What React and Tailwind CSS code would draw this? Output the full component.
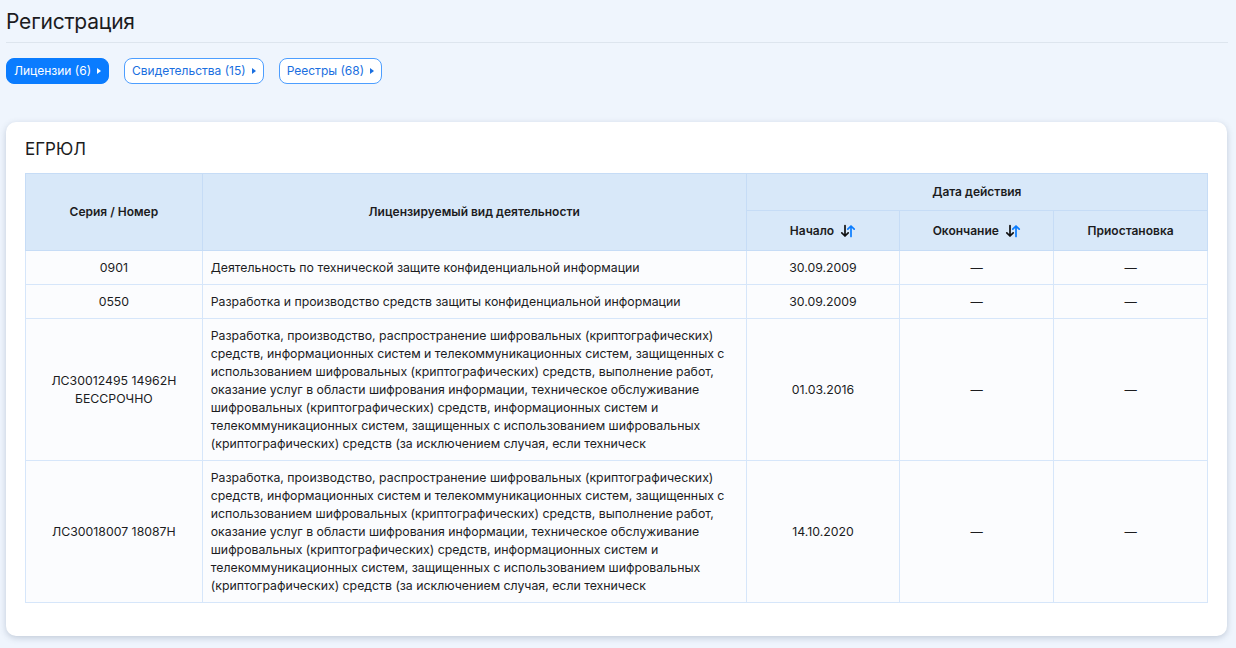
import { Fragment } from 'react';

const longText =
  'Разработка, производство, распространение шифровальных (криптографических) средств, информационных систем и телекоммуникационных систем, защищенных с использованием шифровальных (криптографических) средств, выполнение работ, оказание услуг в области шифрования информации, техническое обслуживание шифровальных (криптографических) средств, информационных систем и телекоммуникационных систем, защищенных с использованием шифровальных (криптографических) средств (за исключением случая, если техническ';

const rows = [
  { num: ['0901'], vid: 'Деятельность по технической защите конфиденциальной информации', start: '30.09.2009' },
  { num: ['0550'], vid: 'Разработка и производство средств защиты конфиденциальной информации', start: '30.09.2009' },
  { num: ['ЛСЗ0012495 14962Н', 'БЕССРОЧНО'], vid: longText, start: '01.03.2016' },
  { num: ['ЛСЗ0018007 18087Н'], vid: longText, start: '14.10.2020' },
];

const tabs = [
  { label: 'Лицензии (6)', active: true },
  { label: 'Свидетельства (15)' },
  { label: 'Реестры (68)' },
];

function Caret() {
  return (
    <svg width="4" height="6" viewBox="0 0 4 6">
      <path d="M0 0 L4 3 L0 6 Z" fill="currentColor" />
    </svg>
  );
}

function SortIcon() {
  return (
    <svg width="16" height="14" viewBox="0 0 16 14" className="ml-1.5 inline-block">
      <path d="M5 1.5 V12 M1.8 8.8 L5 12 L8.2 8.8" stroke="#111" strokeWidth="1.7" fill="none" strokeLinecap="round" strokeLinejoin="round" />
      <path d="M11 12.5 V2 M7.8 5.2 L11 2 L14.2 5.2" stroke="#0a7cff" strokeWidth="1.7" fill="none" strokeLinecap="round" strokeLinejoin="round" />
    </svg>
  );
}

export default function App() {
  return (
    <div className="min-h-[648px] bg-[#eff5fd] px-[6px] pt-[9px] pb-[10px] text-[#1c1c1e] font-['Inter','Noto_Sans',sans-serif]">
      <h1 className="text-[21px] leading-[26px] font-normal tracking-[-0.2px]">Регистрация</h1>
      <div className="mt-[7px] h-px bg-[#dde5ee] mr-[2px]" />

      <div className="mt-[15px] flex gap-[15px]">
        {tabs.map((t) => (
          <button
            key={t.label}
            className={
              t.active
                ? 'h-[26px] flex items-center gap-[6px] rounded-[8px] bg-[#0a7cff] border border-[#0a7cff] px-[7px] text-[12px] text-white'
                : 'h-[26px] flex items-center gap-[6px] rounded-[8px] bg-white border border-[#4d9eff] px-[7px] text-[12px] text-[#1a6fe0]'
            }
          >
            {t.label}
            <Caret />
          </button>
        ))}
      </div>

      <div className="mt-[38px] mr-[3px] rounded-[10px] bg-white shadow-[0_2px_6px_rgba(60,80,110,0.25)] px-[19px] pt-[16px] pb-[33px]">
        <h2 className="text-[17px] leading-[22px] font-normal">ЕГРЮЛ</h2>
        <table className="mt-[13px] w-full border-collapse text-[12.3px] leading-[18px]">
          <colgroup>
            <col className="w-[177px]" />
            <col className="w-[545px]" />
            <col className="w-[154px]" />
            <col className="w-[154px]" />
            <col className="w-[154px]" />
          </colgroup>
          <thead className="bg-[#d8e8f9] font-semibold text-[12px]">
            <tr className="h-[37px]">
              <th rowSpan={2} className="border border-[#c6dcf6] font-semibold">Серия / Номер</th>
              <th rowSpan={2} className="border border-[#c6dcf6] font-semibold">Лицензируемый вид деятельности</th>
              <th colSpan={3} className="border border-[#c6dcf6] font-semibold">Дата действия</th>
            </tr>
            <tr className="h-[40px]">
              <th className="border border-[#c6dcf6] font-semibold">
                <span className="inline-flex items-center">Начало<SortIcon /></span>
              </th>
              <th className="border border-[#c6dcf6] font-semibold">
                <span className="inline-flex items-center">Окончание<SortIcon /></span>
              </th>
              <th className="border border-[#c6dcf6] font-semibold">Приостановка</th>
            </tr>
          </thead>
          <tbody className="bg-[#fbfcfe]">
            {rows.map((r, i) => (
              <tr key={i}>
                <td className="border border-[#d6e6fa] text-center px-2 py-[7.5px]">
                  {r.num.map((n, k) => (
                    <Fragment key={k}>
                      {k > 0 && <br />}
                      {n}
                    </Fragment>
                  ))}
                </td>
                <td className="border border-[#d6e6fa] px-[8px] py-[7.5px]">{r.vid}</td>
                <td className="border border-[#d6e6fa] text-center py-[7.5px]">{r.start}</td>
                <td className="border border-[#d6e6fa] text-center py-[7.5px]">—</td>
                <td className="border border-[#d6e6fa] text-center py-[7.5px]">—</td>
              </tr>
            ))}
          </tbody>
        </table>
      </div>
    </div>
  );
}
